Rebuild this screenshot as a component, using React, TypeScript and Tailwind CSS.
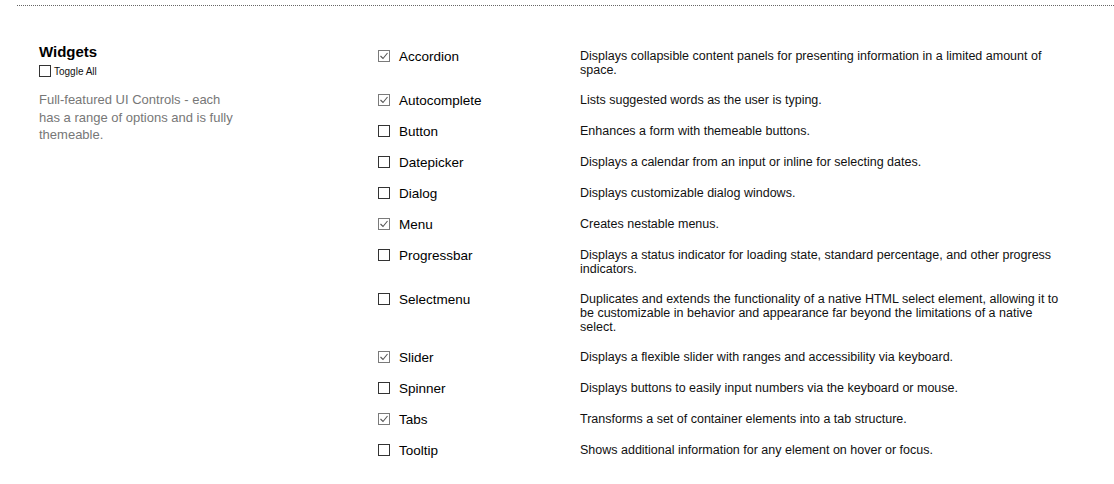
const widgets = [
  { name: 'Accordion', checked: true, text: 'Displays collapsible content panels for presenting information in a limited amount of space.' },
  { name: 'Autocomplete', checked: true, text: 'Lists suggested words as the user is typing.' },
  { name: 'Button', checked: false, text: 'Enhances a form with themeable buttons.' },
  { name: 'Datepicker', checked: false, text: 'Displays a calendar from an input or inline for selecting dates.' },
  { name: 'Dialog', checked: false, text: 'Displays customizable dialog windows.' },
  { name: 'Menu', checked: true, text: 'Creates nestable menus.' },
  { name: 'Progressbar', checked: false, text: 'Displays a status indicator for loading state, standard percentage, and other progress indicators.' },
  { name: 'Selectmenu', checked: false, text: 'Duplicates and extends the functionality of a native HTML select element, allowing it to be customizable in behavior and appearance far beyond the limitations of a native select.' },
  { name: 'Slider', checked: true, text: 'Displays a flexible slider with ranges and accessibility via keyboard.' },
  { name: 'Spinner', checked: false, text: 'Displays buttons to easily input numbers via the keyboard or mouse.' },
  { name: 'Tabs', checked: true, text: 'Transforms a set of container elements into a tab structure.' },
  { name: 'Tooltip', checked: false, text: 'Shows additional information for any element on hover or focus.' },
]

function Box({ checked }: { checked: boolean }) {
  if (checked) {
    return (
      <span className="flex size-[12px] shrink-0 items-center justify-center border border-[#7a7a7a] bg-white">
        <svg viewBox="0 0 10 10" className="size-[10px]">
          <path d="M1.5 5 L4 7.5 L8.5 2" fill="none" stroke="#555" strokeWidth="1.1" />
        </svg>
      </span>
    )
  }
  return <span className="block size-[12px] shrink-0 border border-[#333] bg-white" />
}

export default function App() {
  return (
    <div className="min-h-[484px] bg-white pt-[5px] font-['Liberation_Sans',sans-serif] text-[#111]">
      <div className="ml-[17px] border-t border-dotted border-[#666]" />
      <div className="flex pt-[37px]">
        <div className="ml-[39px] w-[203px] shrink-0">
          <h2 className="text-[15px] leading-[18px] font-bold text-black">Widgets</h2>
          <label className="mt-[4px] flex items-end gap-[3px]">
            <span className="block size-[12px] border border-[#333]" />
            <span className="text-[10px] leading-[11px]">Toggle All</span>
          </label>
          <p className="mt-[14px] text-[13px] leading-[17.5px] text-[#777]">
            Full-featured UI Controls - each has a range of options and is fully themeable.
          </p>
        </div>
        <ul className="ml-[136px] flex flex-col pt-[6px]">
          {widgets.map((w) => (
            <li key={w.name} className="flex pb-[16px]">
              <div className="flex w-[202px] shrink-0 items-start gap-[9px]">
                <span className="flex pt-[1px]">
                  <Box checked={w.checked} />
                </span>
                <span className="text-[13.5px] leading-[15px] text-black">{w.name}</span>
              </div>
              <p className="w-[486px] text-[12.5px] leading-[14px]">{w.text}</p>
            </li>
          ))}
        </ul>
      </div>
    </div>
  )
}
